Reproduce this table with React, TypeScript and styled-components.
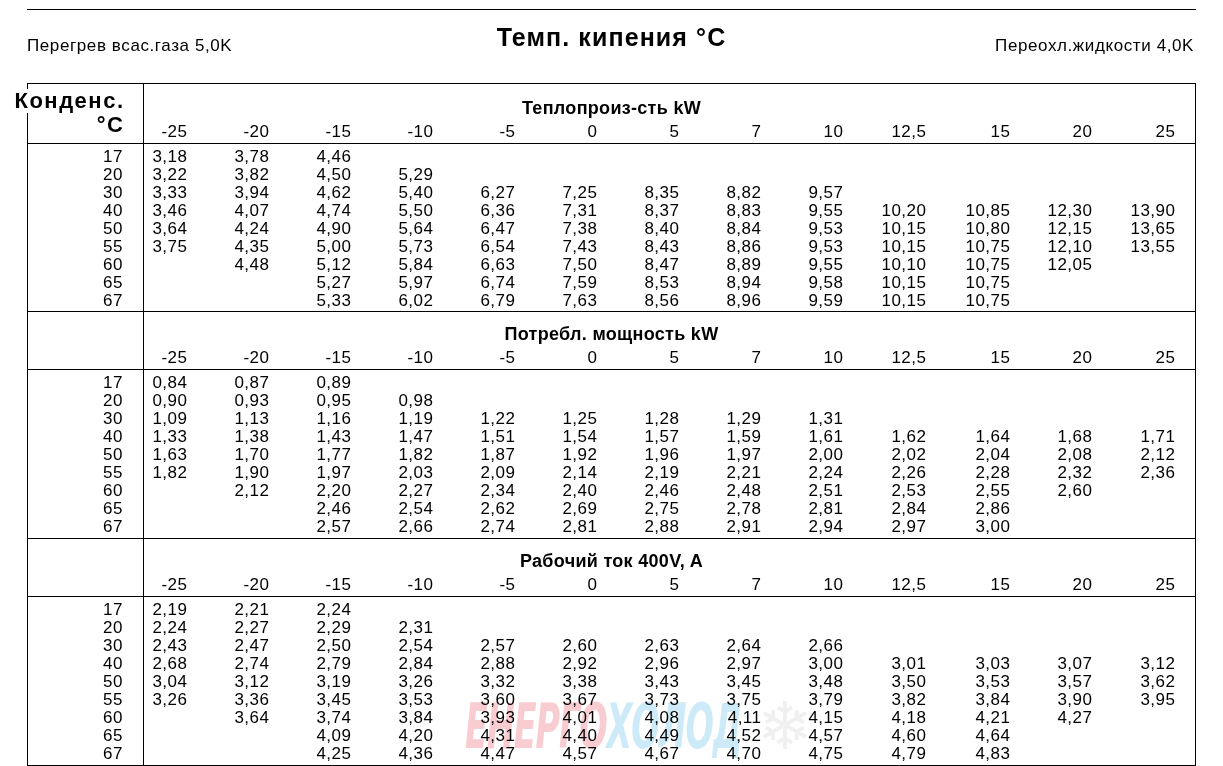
import React from 'react'
import styled, { createGlobalStyle } from 'styled-components'

const GlobalStyle = createGlobalStyle`
  body {
    margin: 0;
    background: #fff;
    color: #000;
    font-family: "Liberation Sans", Arial, sans-serif;
  }
`

const COLS = ['-25', '-20', '-15', '-10', '-5', '0', '5', '7', '10', '12,5', '15', '20', '25']
const ROWS = ['17', '20', '30', '40', '50', '55', '60', '65', '67']
const GRID_COLS = '43px repeat(8, 82px) 83px 84px 82px 83px'

const sections = [
  {
    title: 'Теплопроиз-сть kW',
    values: [
      ['3,18', '3,78', '4,46'],
      ['3,22', '3,82', '4,50', '5,29'],
      ['3,33', '3,94', '4,62', '5,40', '6,27', '7,25', '8,35', '8,82', '9,57'],
      ['3,46', '4,07', '4,74', '5,50', '6,36', '7,31', '8,37', '8,83', '9,55', '10,20', '10,85', '12,30', '13,90'],
      ['3,64', '4,24', '4,90', '5,64', '6,47', '7,38', '8,40', '8,84', '9,53', '10,15', '10,80', '12,15', '13,65'],
      ['3,75', '4,35', '5,00', '5,73', '6,54', '7,43', '8,43', '8,86', '9,53', '10,15', '10,75', '12,10', '13,55'],
      ['', '4,48', '5,12', '5,84', '6,63', '7,50', '8,47', '8,89', '9,55', '10,10', '10,75', '12,05'],
      ['', '', '5,27', '5,97', '6,74', '7,59', '8,53', '8,94', '9,58', '10,15', '10,75'],
      ['', '', '5,33', '6,02', '6,79', '7,63', '8,56', '8,96', '9,59', '10,15', '10,75'],
    ],
  },
  {
    title: 'Потребл. мощность kW',
    values: [
      ['0,84', '0,87', '0,89'],
      ['0,90', '0,93', '0,95', '0,98'],
      ['1,09', '1,13', '1,16', '1,19', '1,22', '1,25', '1,28', '1,29', '1,31'],
      ['1,33', '1,38', '1,43', '1,47', '1,51', '1,54', '1,57', '1,59', '1,61', '1,62', '1,64', '1,68', '1,71'],
      ['1,63', '1,70', '1,77', '1,82', '1,87', '1,92', '1,96', '1,97', '2,00', '2,02', '2,04', '2,08', '2,12'],
      ['1,82', '1,90', '1,97', '2,03', '2,09', '2,14', '2,19', '2,21', '2,24', '2,26', '2,28', '2,32', '2,36'],
      ['', '2,12', '2,20', '2,27', '2,34', '2,40', '2,46', '2,48', '2,51', '2,53', '2,55', '2,60'],
      ['', '', '2,46', '2,54', '2,62', '2,69', '2,75', '2,78', '2,81', '2,84', '2,86'],
      ['', '', '2,57', '2,66', '2,74', '2,81', '2,88', '2,91', '2,94', '2,97', '3,00'],
    ],
  },
  {
    title: 'Рабочий ток 400V, A',
    values: [
      ['2,19', '2,21', '2,24'],
      ['2,24', '2,27', '2,29', '2,31'],
      ['2,43', '2,47', '2,50', '2,54', '2,57', '2,60', '2,63', '2,64', '2,66'],
      ['2,68', '2,74', '2,79', '2,84', '2,88', '2,92', '2,96', '2,97', '3,00', '3,01', '3,03', '3,07', '3,12'],
      ['3,04', '3,12', '3,19', '3,26', '3,32', '3,38', '3,43', '3,45', '3,48', '3,50', '3,53', '3,57', '3,62'],
      ['3,26', '3,36', '3,45', '3,53', '3,60', '3,67', '3,73', '3,75', '3,79', '3,82', '3,84', '3,90', '3,95'],
      ['', '3,64', '3,74', '3,84', '3,93', '4,01', '4,08', '4,11', '4,15', '4,18', '4,21', '4,27'],
      ['', '', '4,09', '4,20', '4,31', '4,40', '4,49', '4,52', '4,57', '4,60', '4,64'],
      ['', '', '4,25', '4,36', '4,47', '4,57', '4,67', '4,70', '4,75', '4,79', '4,83'],
    ],
  },
]

const Page = styled.div`
  position: relative;
  width: 1169px;
  margin-left: 27px;
  padding-top: 9px;
`

const TopRule = styled.div`
  border-top: 1px solid #000;
`

const Heading = styled.div`
  display: grid;
  grid-template-columns: 1fr auto 1fr;
  height: 73px;
`

const SideNote = styled.div<{ $right?: boolean }>`
  padding-top: 27px;
  padding-right: ${p => (p.$right ? '2px' : '0')};
  font-size: 17px;
  letter-spacing: 0.6px;
  line-height: 18px;
  justify-self: ${p => (p.$right ? 'end' : 'start')};
  white-space: nowrap;
`

const Title = styled.div`
  padding-top: 13px;
  font-size: 25px;
  font-weight: bold;
  letter-spacing: 1.1px;
  line-height: 28px;
  white-space: nowrap;
`

const Table = styled.div`
  border: 1px solid #000;
  border-bottom: none;
`

const SectionHead = styled.div<{ $first?: boolean }>`
  display: grid;
  grid-template-columns: 116px 1fr;
  height: ${p => (p.$first ? '59px' : '57px')};
  border-bottom: 1px solid #000;
`

const AxisLabel = styled.div`
  display: flex;
  flex-direction: column;
  align-items: flex-end;
  padding: 5px 20px 0 0;
  border-right: 1px solid #000;
  font-size: 22px;
  font-weight: bold;
  letter-spacing: 1.5px;
  line-height: 24px;
  white-space: nowrap;

  span {
    position: relative;
    margin-right: -1.5px;
    background: #fff;
  }
`

const EmptyLabel = styled.div`
  border-right: 1px solid #000;
`

const HeadBody = styled.div<{ $first?: boolean }>`
  padding-top: ${p => (p.$first ? '14px' : '12px')};
`

const SectionTitle = styled.div`
  padding-right: 116px;
  font-size: 18px;
  font-weight: bold;
  letter-spacing: 0.3px;
  line-height: 20px;
  text-align: center;
`

const ValueGrid = styled.div`
  display: grid;
  grid-template-columns: ${GRID_COLS};
  font-size: 17px;
  line-height: 18px;
  letter-spacing: 0.5px;
`

const ColHeads = styled(ValueGrid)`
  margin-top: 5px;
`

const Cell = styled.div`
  margin-right: -0.5px;
  text-align: right;
  white-space: nowrap;
`

const DataBlock = styled.div<{ $first?: boolean }>`
  display: grid;
  grid-template-columns: 116px 1fr;
  height: ${p => (p.$first ? '167px' : '168px')};
  border-bottom: 1px solid #000;
`

const RowLabels = styled.div`
  padding: 4px 20px 0 0;
  border-right: 1px solid #000;
  font-size: 17px;
  letter-spacing: 0.5px;
  line-height: 18px;
  text-align: right;
`

const DataBody = styled.div`
  padding-top: 4px;
`

const Watermark = styled.div`
  position: absolute;
  left: 438px;
  top: 692px;
  display: flex;
  align-items: center;
  pointer-events: none;
  mix-blend-mode: multiply;
`

const MarkText = styled.span`
  display: inline-block;
  width: 300px;
  font-family: "DejaVu Sans", sans-serif;
  font-size: 62px;
  font-weight: bold;
  font-style: italic;
  line-height: 70px;
  letter-spacing: -2px;
  transform: scaleX(0.54);
  transform-origin: left center;
  white-space: nowrap;
`

const MarkRed = styled.span`
  color: #f8ccd0;
`

const MarkBlue = styled.span`
  color: #cdeaf8;
`

const Snow = styled.span`
  margin-left: -8px;
  font-family: "DejaVu Sans", sans-serif;
  font-size: 66px;
  line-height: 70px;
  color: #f0f0f0;
`

type Section = { title: string; values: string[][] }

const TableSection = ({ section, first }: { section: Section; first: boolean }) => (
  <>
    <SectionHead $first={first}>
      {first ? (
        <AxisLabel>
          <span>Конденс.</span>
          <span>°C</span>
        </AxisLabel>
      ) : (
        <EmptyLabel />
      )}
      <HeadBody $first={first}>
        <SectionTitle>{section.title}</SectionTitle>
        <ColHeads>
          {COLS.map(c => (
            <Cell key={c}>{c}</Cell>
          ))}
        </ColHeads>
      </HeadBody>
    </SectionHead>
    <DataBlock $first={first}>
      <RowLabels>
        {ROWS.map(r => (
          <div key={r}>{r}</div>
        ))}
      </RowLabels>
      <DataBody>
        <ValueGrid>
          {section.values.map((row, ri) =>
            COLS.map((_, ci) => <Cell key={`${ri}-${ci}`}>{row[ci] || '\u00a0'}</Cell>)
          )}
        </ValueGrid>
      </DataBody>
    </DataBlock>
  </>
)

export default function App() {
  return (
    <>
      <GlobalStyle />
      <Page>
        <TopRule />
        <Heading>
          <SideNote>Перегрев всас.газа 5,0K</SideNote>
          <Title>Темп. кипения °C</Title>
          <SideNote $right>Переохл.жидкости 4,0K</SideNote>
        </Heading>
        <Table>
          {sections.map((s, i) => (
            <TableSection key={s.title} section={s} first={i === 0} />
          ))}
        </Table>
        <Watermark>
          <MarkText>
            <MarkRed>ЕНЕРГО</MarkRed>
            <MarkBlue>ХОЛОД</MarkBlue>
          </MarkText>
          <Snow>❄</Snow>
        </Watermark>
      </Page>
    </>
  )
}
